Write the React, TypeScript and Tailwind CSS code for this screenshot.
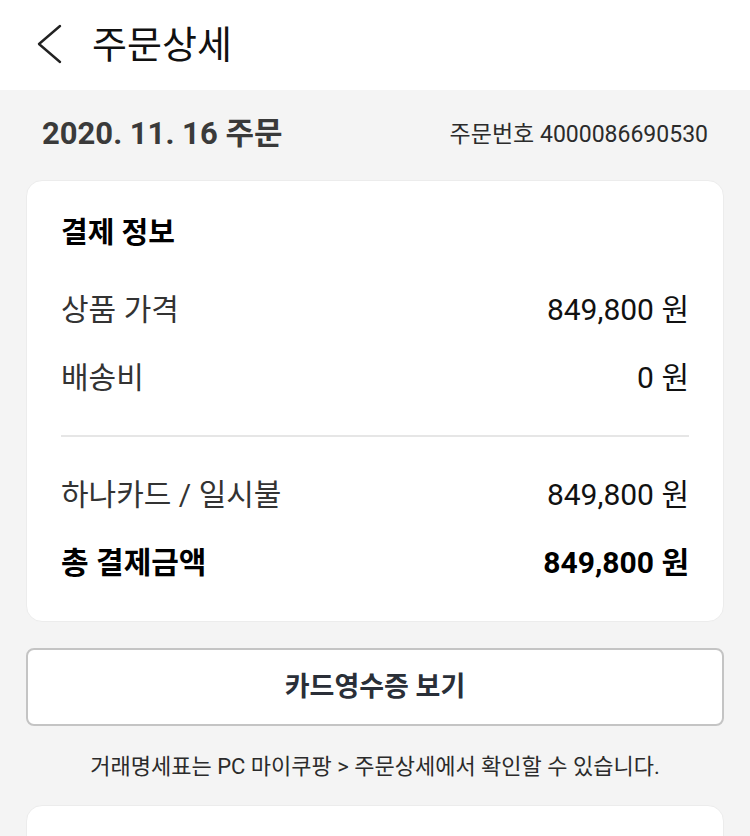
const font = { fontFamily: 'Roboto, "Noto Sans CJK KR", "Noto Sans", sans-serif' };

function Row({ label, value, bold }: { label: string; value: string; bold?: boolean }) {
  return (
    <div className={`flex items-center justify-between h-[68px] ${bold ? 'text-[30px] font-bold text-black' : 'text-[30px] text-[#222]'}`}>
      <span className={bold ? '' : 'text-[#333]'}>{label}</span>
      <span className={bold ? '' : 'text-[#111]'}>{value}</span>
    </div>
  );
}

export default function App() {
  return (
    <div className="w-[750px] h-[836px] overflow-hidden bg-[#f4f4f4]" style={font}>
      {/* 헤더 */}
      <div className="h-[90px] bg-white flex items-center pl-[36px]">
        <svg width="26" height="40" viewBox="0 0 26 40" fill="none" className="mt-[-2px]">
          <polyline points="24,2 3,20 24,38" stroke="#222" strokeWidth="2.4" strokeLinecap="round" strokeLinejoin="round" />
        </svg>
        <h1 className="ml-[30px] text-[38px] text-[#111] leading-none">주문상세</h1>
      </div>

      <div className="px-[26px]">
        {/* 주문일 / 주문번호 */}
        <div className="h-[90px] flex items-center justify-between px-[16px] pb-[2px]">
          <span className="text-[31px] font-bold text-[#3a3a3a]">2020. 11. 16 주문</span>
          <span className="text-[23px] text-[#2b2b2b] mt-[2px]">주문번호 4000086690530</span>
        </div>

        {/* 결제 정보 */}
        <div className="bg-white rounded-[16px] border border-[#ececec] h-[442px] px-[34px] pt-[28px]">
          <div className="text-[29px] font-bold text-black leading-none h-[48px] flex items-center">결제 정보</div>
          <div className="mt-[18px]">
            <Row label="상품 가격" value="849,800 원" />
            <Row label="배송비" value="0 원" />
          </div>
          <div className="h-[2px] bg-[#e6e6e6] mt-[24px] mb-[23px]" />
          <Row label="하나카드 / 일시불" value="849,800 원" />
          <Row label="총 결제금액" value="849,800 원" bold />
        </div>

        {/* 카드영수증 */}
        <button className="mt-[26px] w-full h-[78px] bg-white border-2 border-[#c4c4c4] rounded-[8px] text-[27px] font-bold text-[#2a2f38]">
          카드영수증 보기
        </button>

        <p className="mt-[24px] text-center text-[22px] text-[#2b2b2b]">
          거래명세표는 PC 마이쿠팡 &gt; 주문상세에서 확인할 수 있습니다.
        </p>

        <div className="mt-[22px] bg-white rounded-[16px] border border-[#ececec] h-[120px]" />
      </div>
    </div>
  );
}
